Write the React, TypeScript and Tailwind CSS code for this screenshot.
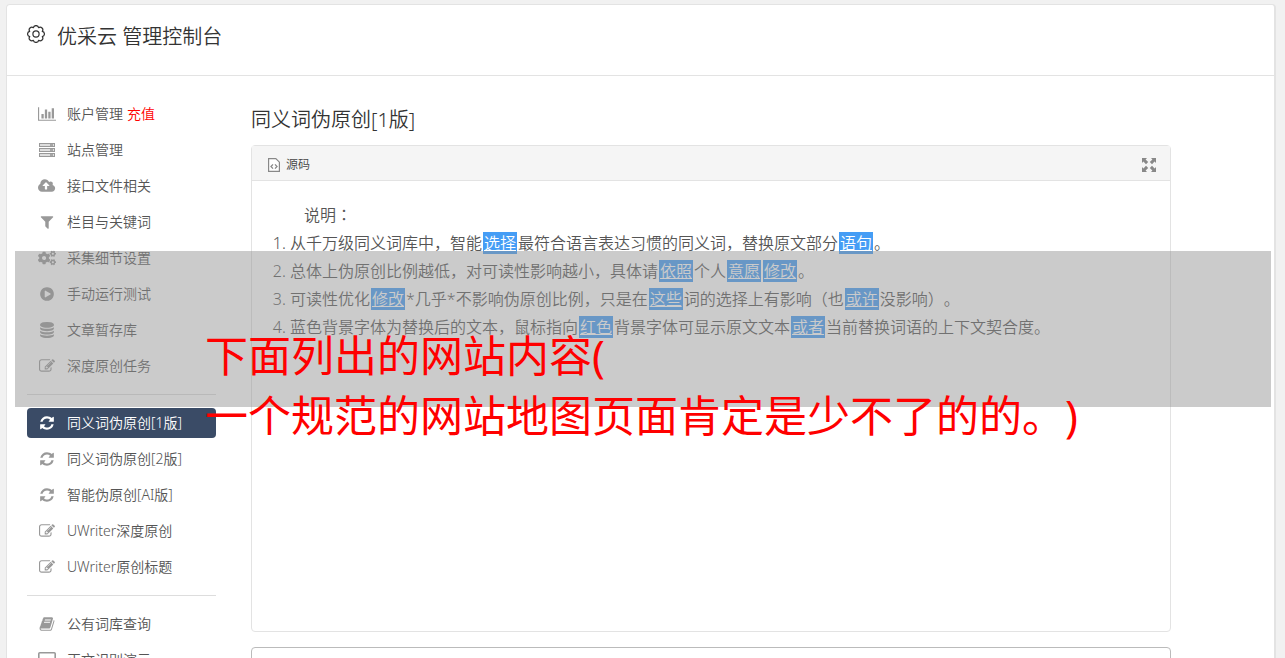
import React from 'react';
import { FaCogs } from 'react-icons/fa';

interface GlyphProps {
  d: string;
  width?: number;
}

const Glyph: React.FC<GlyphProps> = ({ d, width = 1792 }) => (
  <svg viewBox={`0 0 ${width} 1792`} className="h-4 w-auto" fill="currentColor" aria-hidden="true">
    <path d={d} />
  </svg>
);

const EDIT =
  'M888 1184l116-116-152-152-116 116v56h96v96h56zm440-720q-16-16-33 1l-350 350q-17 17-1 33t33-1l350-350q17-17 1-33zm80 594v190q0 119-84.5 203.5t-203.5 84.5h-832q-119 0-203.5-84.5t-84.5-203.5v-832q0-119 84.5-203.5t203.5-84.5h832q63 0 117 25 15 7 18 23 3 17-9 29l-49 49q-14 14-32 8-23-6-45-6h-832q-66 0-113 47t-47 113v832q0 66 47 113t113 47h832q66 0 113-47t47-113v-126q0-13 9-22l64-64q15-15 35-7t20 29zm-96-738l288 288-672 672h-288v-288zm444 132l-92 92-288-288 92-92q28-28 68-28t68 28l152 152q28 28 28 68t-28 68z';
const REFRESH =
  'M1639 1056q0 5-1 7-64 268-268 434.5t-478 166.5q-146 0-282.5-55t-243.5-157l-129 129q-19 19-45 19t-45-19-19-45v-448q0-26 19-45t45-19h448q26 0 45 19t19 45-19 45l-137 137q71 66 161 102t187 36q134 0 250-65t186-179q11-17 53-117 8-23 30-23h192q13 0 22.5 9.5t9.5 22.5zm25-800v448q0 26-19 45t-45 19h-448q-26 0-45-19t-19-45 19-45l138-138q-148-137-349-137-134 0-250 65t-186 179q-11 17-53 117-8 23-30 23h-199q-13 0-22.5-9.5t-9.5-22.5v-7q65-268 270-434.5t480-166.5q146 0 284 55.5t245 156.5l130-129q19-19 45-19t45 19 19 45z';
const DATABASE =
  'M896 768q237 0 443-43t325-127v170q0 69-103 128t-280 93.5-385 34.5-385-34.5-280-93.5-103-128v-170q119 84 325 127t443 43zm0 768q237 0 443-43t325-127v170q0 69-103 128t-280 93.5-385 34.5-385-34.5-280-93.5-103-128v-170q119 84 325 127t443 43zm0-384q237 0 443-43t325-127v170q0 69-103 128t-280 93.5-385 34.5-385-34.5-280-93.5-103-128v-170q119 84 325 127t443 43zm0-1152q208 0 385 34.5t280 93.5 103 128v128q0 69-103 128t-280 93.5-385 34.5-385-34.5-280-93.5-103-128v-128q0-69 103-128t280-93.5 385-34.5z';
const UPLOAD =
  'M1280 864q0-14-9-23l-352-352q-9-9-23-9t-23 9l-351 351q-10 12-10 24 0 14 9 23t23 9h224v352q0 13 9.5 22.5t22.5 9.5h192q13 0 22.5-9.5t9.5-22.5v-352h224q13 0 22.5-9.5t9.5-22.5zm640 288q0 159-112.5 271.5t-271.5 112.5h-1088q-185 0-316.5-131.5t-131.5-316.5q0-130 70-240t188-165q-2-30-2-43 0-212 150-362t362-150q156 0 285.5 87t188.5 231q71-62 166-62 106 0 181 75t75 181q0 76-41 138 130 31 213.5 135.5t83.5 238.5z';
const PLAY =
  'M896 128q209 0 385.5 103t279.5 279.5 103 385.5-103 385.5-279.5 279.5-385.5 103-385.5-103-279.5-279.5-103-385.5 103-385.5 279.5-279.5 385.5-103zm384 823q32-18 32-55t-32-55l-544-320q-31-19-64-1-32 19-32 56v640q0 37 32 56 16 8 32 8 17 0 32-9z';
const FILTER =
  'M1595 295q17 41-14 70l-493 493v742q0 42-39 59-13 5-25 5-27 0-45-19l-256-256q-19-19-19-45v-486l-493-493q-31-29-14-70 17-39 59-39h1280q42 0 59 39z';
const CHART =
  'M640 896v512h-256v-512h256zm384-512v1024h-256v-1024h256zm1024 1152v128h-2048v-1536h128v1408h1920zm-640-896v768h-256v-768h256zm384-384v1152h-256v-1152h256z';
const BOOK =
  'M1703 478q40 57 18 129l-275 906q-19 64-76.5 107.5t-122.5 43.5h-923q-77 0-148.5-53.5t-99.5-131.5q-24-67-2-127 0-4 3-27t4-37q1-8-3-21.5t-3-19.5q2-11 8-21t16.5-23.5 16.5-23.5q23-38 45-91.5t30-91.5q3-10 .5-30t-.5-28q3-11 17-28t17-23q21-36 42-92t25-90q1-9-2.5-32t.5-28q4-13 22-30.5t22-22.5q19-26 42.5-84.5t27.5-96.5q1-8-3-25.5t-2-26.5q2-8 9-18t18-23 17-21q8-12 16.5-30.5t15-35 16-36 19.5-32 26.5-23.5 36-11.5 47.5 5.5l-1 3q38-9 51-9h761q74 0 114 56t18 130l-274 906q-36 119-71.5 153.5t-128.5 34.5h-869q-27 0-38 15-11 16-1 43 24 70 144 70h923q29 0 56-15.5t35-41.5l300-987q7-22 5-57 38 15 59 43zm-1064 2q-4 13 2 22.5t20 9.5h608q13 0 25.5-9.5t16.5-22.5l21-64q4-13-2-22.5t-20-9.5h-608q-13 0-25.5 9.5t-16.5 22.5zm-83 256q-4 13 2 22.5t20 9.5h608q13 0 25.5-9.5t16.5-22.5l21-64q4-13-2-22.5t-20-9.5h-608q-13 0-25.5 9.5t-16.5 22.5z';

const ServerIcon = () => (
  <svg viewBox="0 0 16 14" className="h-3.5 w-4" fill="none" stroke="currentColor" aria-hidden="true">
    {[0, 5, 10].map(y => (
      <g key={y}>
        <rect x="0.5" y={y + 0.5} width="15" height="3" fill="#ddd" />
        <path d={`M11 ${y + 2}h3`} strokeWidth="1.6" />
      </g>
    ))}
  </svg>
);

const ScreenIcon = () => (
  <svg viewBox="0 0 18 16" className="h-4 w-[18px]" fill="none" stroke="currentColor" aria-hidden="true">
    <rect x="0.8" y="0.8" width="16.4" height="12" rx="1" strokeWidth="1.6" />
    <path d="M5 15h8M9 12v3" />
  </svg>
);

const GearIcon = () => (
  <svg viewBox="0 0 18 18" className="size-[18px]" fill="none" stroke="currentColor" strokeWidth="1.2" aria-hidden="true">
    <circle cx="9" cy="9" r="3.1" />
    <path
      strokeLinejoin="round"
      d="M15.3 6.4A2.65 2.65 0 0 1 15.3 11.6A2.65 2.65 0 0 1 11.6 15.3A2.65 2.65 0 0 1 6.4 15.3A2.65 2.65 0 0 1 2.7 11.6A2.65 2.65 0 0 1 2.7 6.4A2.65 2.65 0 0 1 6.4 2.7A2.65 2.65 0 0 1 11.6 2.7A2.65 2.65 0 0 1 15.3 6.4z"
    />
  </svg>
);

const SourceIcon = () => (
  <svg viewBox="0 0 12 14" className="h-3.5 w-3" fill="none" stroke="currentColor" aria-hidden="true">
    <path d="M.6.6h7.2l3.6 3.6v9.2H.6z" fill="#fff" strokeWidth="1.2" />
    <path d="M5 6.4L3 8.5l2 2.1M7 6.4l2 2.1-2 2.1" strokeWidth="1.3" />
  </svg>
);

const ExpandIcon = () => (
  <svg viewBox="0 0 14 14" className="size-3.5" fill="currentColor" aria-hidden="true">
    <path d="M0 0h5L3.6 1.4 6.2 4 4 6.2 1.4 3.6 0 5zM14 0v5l-1.4-1.4L10 6.2 7.8 4l2.6-2.6L9 0zM0 14V9l1.4 1.4L4 7.8 6.2 10l-2.6 2.6L5 14zM14 14H9l1.4-1.4L7.8 10 10 7.8l2.6 2.6L14 9z" />
  </svg>
);

interface MenuItem {
  label: string;
  icon: React.ReactNode;
  extra?: string;
  active?: boolean;
}

const MENU: MenuItem[][] = [
  [
    { label: '账户管理', icon: <Glyph d={CHART} width={2048} />, extra: '充值' },
    { label: '站点管理', icon: <ServerIcon /> },
    { label: '接口文件相关', icon: <Glyph d={UPLOAD} width={1920} /> },
    { label: '栏目与关键词', icon: <Glyph d={FILTER} /> },
    { label: '采集细节设置', icon: <FaCogs className="size-[18px]" /> },
    { label: '手动运行测试', icon: <Glyph d={PLAY} /> },
    { label: '文章暂存库', icon: <Glyph d={DATABASE} /> },
    { label: '深度原创任务', icon: <Glyph d={EDIT} /> },
  ],
  [
    { label: '同义词伪原创[1版]', icon: <Glyph d={REFRESH} />, active: true },
    { label: '同义词伪原创[2版]', icon: <Glyph d={REFRESH} /> },
    { label: '智能伪原创[AI版]', icon: <Glyph d={REFRESH} /> },
    { label: 'UWriter深度原创', icon: <Glyph d={EDIT} /> },
    { label: 'UWriter原创标题', icon: <Glyph d={EDIT} /> },
  ],
  [
    { label: '公有词库查询', icon: <Glyph d={BOOK} /> },
    { label: '正文识别演示', icon: <ScreenIcon /> },
  ],
];

const Word: React.FC<{ children: React.ReactNode }> = ({ children }) => (
  <a href="#" className="mx-px bg-[#459df5] px-px text-white underline">
    {children}
  </a>
);

const Sidebar: React.FC = () => (
  <nav className="w-[189px] shrink-0 pt-[23px]">
    {MENU.map((group, index) => (
      <ul
        key={index}
        className={`flex flex-col gap-1.5 ${index > 0 ? 'mt-[13px] border-t border-[#ddd] pt-[13px]' : ''}`}
      >
        {group.map(item => (
          <li key={item.label}>
            <a
              href="#"
              className={`flex h-[30px] items-center rounded text-sm ${item.active ? 'bg-[#3a4b66] text-white' : 'text-[#555]'}`}
            >
              <span className={`flex w-10 justify-center ${item.active ? 'text-white' : 'text-[#999]'}`}>
                {item.icon}
              </span>
              <span>{item.label}</span>
              {item.extra && <span className="ml-1 text-[#f00]">{item.extra}</span>}
            </a>
          </li>
        ))}
      </ul>
    ))}
  </nav>
);

const App: React.FC = () => {
  return (
    <div className="relative h-screen overflow-hidden bg-[#f1f1f1] pt-1 pr-[9px] pl-1.5 font-['Noto_Sans','Noto_Sans_CJK_SC',sans-serif] font-[350] [text-spacing-trim:space-all]">
      <div className="min-h-full rounded border border-[#e3e3e3] border-r-2 bg-white">
        <header className="flex h-[71px] items-start gap-3 border-b border-[#e3e3e3] px-5 pt-[18px] text-xl text-[#333]">
          <span className="pt-0.5">
            <GearIcon />
          </span>
          <h1 className="leading-7">优采云 管理控制台</h1>
        </header>

        <div className="flex gap-[35px] px-5">
          <Sidebar />

          <main className="max-w-[920px] flex-1 pt-7">
            <h2 className="mb-2.5 text-xl leading-[31px] text-[#333]">同义词伪原创[1版]</h2>

            <section className="min-h-[487px] rounded border border-[#e3e3e3]">
              <div className="flex h-[35px] items-center justify-between border-b border-[#e3e3e3] bg-[#f5f5f5] pt-1 pr-3.5 pl-4 text-xs text-[#444]">
                <button type="button" className="flex items-center gap-1.5">
                  <span className="text-[#888]"><SourceIcon /></span>
                  源码
                </button>
                <button type="button" aria-label="全屏" className="text-[#888]">
                  <ExpandIcon />
                </button>
              </div>
              <div className="px-5 pt-5 text-base leading-7 text-[#555]">
                <p className="indent-8 font-['Noto_Sans','Noto_Sans_CJK_TC',sans-serif]">说明：</p>
                <ol className="list-decimal pl-[18px]">
                  <li>从千万级同义词库中，智能<Word>选择</Word>最符合语言表达习惯的同义词，替换原文部分<Word>语句</Word>。</li>
                  <li>总体上伪原创比例越低，对可读性影响越小，具体请<Word>依照</Word>个人<Word>意愿</Word><Word>修改</Word>。</li>
                  <li>可读性优化<Word>修改</Word>*几乎*不影响伪原创比例，只是在<Word>这些</Word>词的选择上有影响（也<Word>或许</Word>没影响）。</li>
                  <li>蓝色背景字体为替换后的文本，鼠标指向<Word>红色</Word>背景字体可显示原文文本<Word>或者</Word>当前替换词语的上下文契合度。</li>
                </ol>
              </div>
            </section>

            <textarea aria-label="内容" className="mt-[15px] block h-24 w-full resize-none rounded-sm border border-[#bbb]" />
          </main>
        </div>
      </div>

      {/* Caption band over the page */}
      <div className="absolute top-[251px] right-3.5 left-[15px] h-[156px] bg-[#909090]/47" />
      <p className="absolute top-[326px] left-[205px] text-[43px] leading-[60px] font-normal text-[#f00]">
        下面列出的网站内容(
        <br />
        一个规范的网站地图页面肯定是少不了的的。)
      </p>
    </div>
  );
};

export default App;
